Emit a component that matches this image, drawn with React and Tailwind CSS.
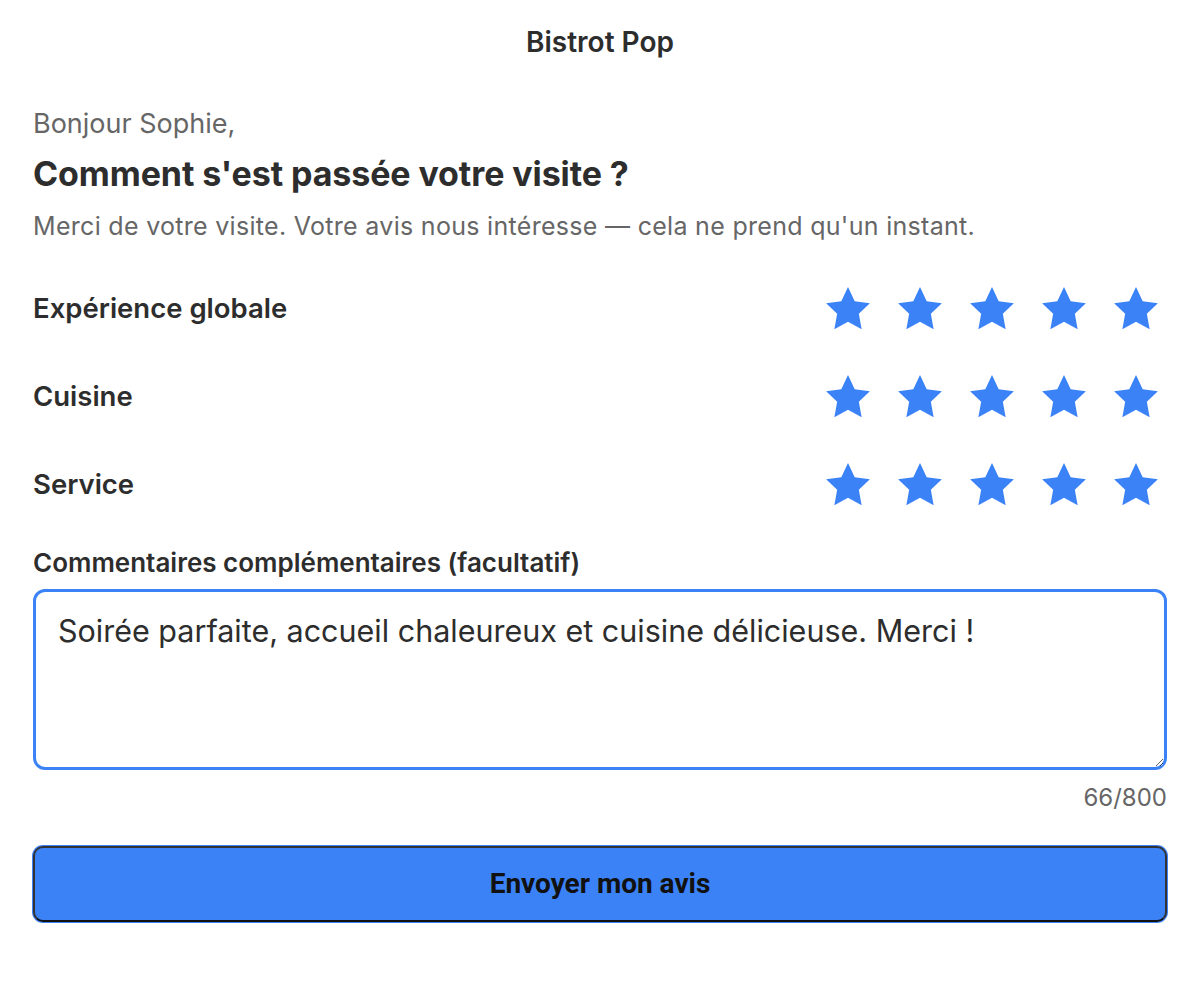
import React from "react";

function Star() {
  return (
    <svg width="52" height="50" viewBox="0 0 24 23" className="block">
      <path
        fill="#3b82f6"
        d="M12 1.4l3.1 6.5 7 .9-5.1 4.9 1.3 7.1L12 17.4 5.7 20.8l1.3-7.1L1.9 8.8l7-.9z"
      />
    </svg>
  );
}

function Row({ label }) {
  return (
    <div className="flex items-center justify-between h-[88px]">
      <div className="text-[27.5px] font-semibold text-[#2d2d2d]">{label}</div>
      <div className="flex gap-[20px] pr-[5px]">
        <Star />
        <Star />
        <Star />
        <Star />
        <Star />
      </div>
    </div>
  );
}

export default function App() {
  return (
    <div
      className="bg-white w-[1200px] h-[982px] px-[33px] text-[#2d2d2d]"
      style={{ fontFamily: "Inter, 'Noto Sans', sans-serif" }}
    >
      <div className="h-[84px] flex items-center justify-center text-[28px] font-semibold">
        Bistrot Pop
      </div>
      <div className="pt-[22px] text-[27px] text-[#666] leading-[36px]">Bonjour Sophie,</div>
      <h1 className="mt-[10px] text-[34px] font-bold leading-[44px] tracking-[-0.1px]">
        Comment s'est passée votre visite ?
      </h1>
      <p className="mt-[14px] text-[25px] tracking-[0.3px] text-[#666] leading-[32px]">
        Merci de votre visite. Votre avis nous intéresse — cela ne prend qu'un instant.
      </p>
      <div className="mt-[23px]">
        <Row label="Expérience globale" />
        <Row label="Cuisine" />
        <Row label="Service" />
      </div>
      <div className="mt-[19px] text-[26px] font-semibold leading-[30px]">
        Commentaires complémentaires (facultatif)
      </div>
      <textarea
        className="mt-[11px] block w-full h-[181px] border-[3px] border-[#3b82f6] rounded-[12px] px-[22px] pt-[19px] pb-[10px] text-[30.5px] leading-[40px] text-[#2d2d2d] outline-none resize-y"
        defaultValue="Soirée parfaite, accueil chaleureux et cuisine délicieuse. Merci !"
      />
      <div className="mt-[14px] text-right text-[24px] text-[#666] leading-[28px]">66/800</div>
      <button
        className="mt-[34px] w-full h-[76px] rounded-[10px] bg-[#3b82f6] border-2 border-[#333] border-b-[#111] text-[28px] font-bold text-[#111] ring-1 ring-[#3b82f6]"
        style={{ fontFamily: "Roboto, sans-serif" }}
      >
        Envoyer mon avis
      </button>
    </div>
  );
}
